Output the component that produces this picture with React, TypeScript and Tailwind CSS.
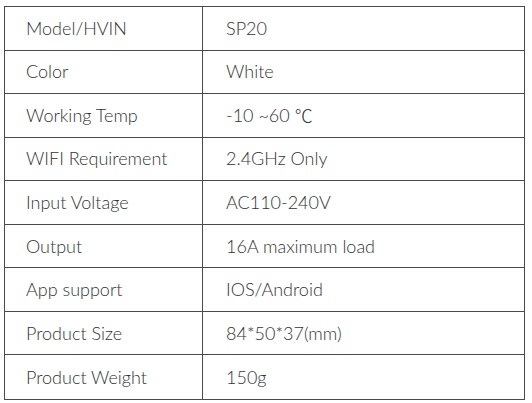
import React from "react";

const rows: [string, React.ReactNode][] = [
  ["Model/HVIN", "SP20"],
  ["Color", "White"],
  [
    "Working Temp",
    <>
      -10 ~60{" "}
      <span className="font-light" style={{ fontFamily: "'Noto Sans CJK SC', sans-serif" }}>℃</span>
    </>,
  ],
  ["WIFI Requirement", "2.4GHz Only"],
  ["Input Voltage", "AC110-240V"],
  ["Output", "16A maximum load"],
  ["App support", "IOS/Android"],
  ["Product Size", "84*50*37(mm)"],
  ["Product Weight", "150g"],
];

export default function App() {
  return (
    <div className="w-[532px] h-[403px] bg-white pt-[6px] pl-[4px]" style={{ fontFamily: "Lato, 'Open Sans', sans-serif" }}>
      <div className="w-[521px] h-[394px] border border-[#4a4a4a] grid grid-cols-[198px_1fr] grid-rows-[repeat(9,1fr)] text-[18px] text-[#333] font-light">
        {rows.map(([k, v], i) => (
          <React.Fragment key={k}>
            <div className={`flex items-center pl-[21px] border-r-[1.5px] border-[#4a4a4a] ${i < rows.length - 1 ? "border-b" : ""}`}>{k}</div>
            <div className={`flex items-center whitespace-pre pl-[23px] border-[#4a4a4a] ${i < rows.length - 1 ? "border-b" : ""}`}>{v}</div>
          </React.Fragment>
        ))}
      </div>
    </div>
  );
}
